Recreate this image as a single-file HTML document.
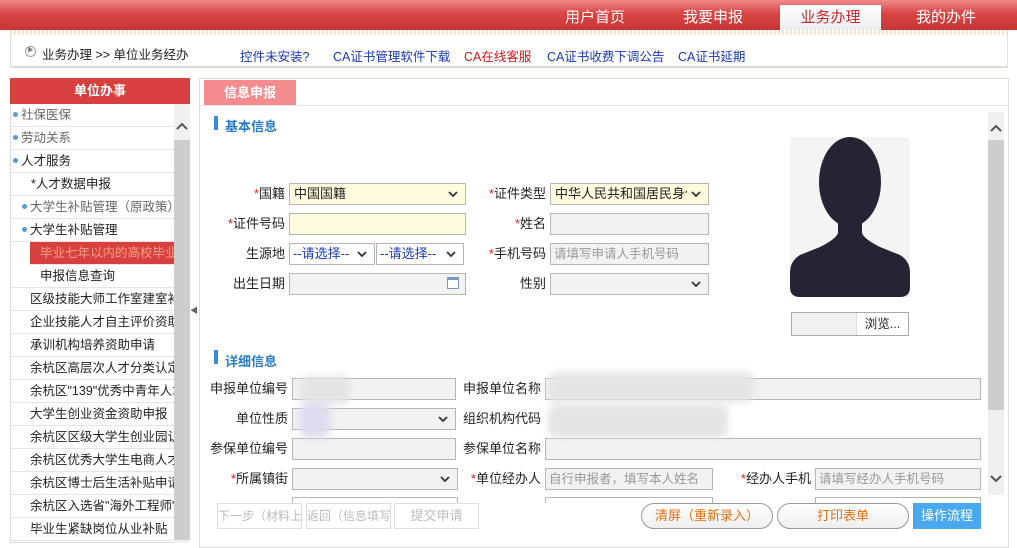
<!DOCTYPE html>
<html><head><meta charset="utf-8"><style>
*{box-sizing:border-box;margin:0;padding:0}
body{width:1017px;height:543px;overflow:hidden;background:#fff;font-family:"Liberation Sans","Noto Sans CJK SC",sans-serif;font-size:13px;color:#222;position:relative}
.a{position:absolute}
.top{left:0;top:0;width:1017px;height:30px;background:linear-gradient(#f08a8a,#d84545 45%,#c83434)}
.nav{color:#fff;font-size:15px;top:6px}
.act{left:780px;top:5px;width:101px;height:26px;background:linear-gradient(#fff,#ececec);color:#c8282a;font-size:15px;text-align:center;line-height:26px}
.stripe{left:10px;top:30px;width:998px;height:5px;background:repeating-linear-gradient(90deg,#f3e3cf 0 2px,#fff 2px 4px)}
.crumb{left:10px;top:35px;width:998px;height:33px;border:1px solid #dde;border-top:none;border-bottom:2px solid #d6dce6;background:#fff}
.lk{top:46px;color:#1a3ab8;font-size:12.5px}
.side{left:10px;top:78px;width:180px;height:465px;border:1px solid #ddd}
.sh{left:10px;top:78px;width:180px;height:26px;background:#d84040;color:#fff;font-weight:bold;text-align:center;line-height:26px}
.it{height:23px;line-height:22px;border-bottom:1px solid #e6e6e6;white-space:nowrap;overflow:hidden;width:164px;font-size:12.5px}
.dot{display:inline-block;width:5px;height:5px;border-radius:50%;background:#5b9bd5;margin:0 3px 2px 2px}
.main{left:199px;top:78px;width:810px;height:470px;border:1px solid #ddd}
.lab{text-align:right;font-size:13px;line-height:16px}
.r{color:#e02020}
.in{height:22px;border:1px solid #b5b5b5;background:#f2f2f2}
.y{background:#fffce0}
.sel svg.c{position:absolute;right:7px;top:7px}
.ph{color:#999;font-size:12.5px;line-height:20px;padding-left:3px}
.btn{height:26px;border:1px solid #ddd;color:#bbb;text-align:center;line-height:24px;font-size:13px;background:#fff;white-space:nowrap;overflow:hidden}
.rb{border:1px solid #999;border-radius:13px;color:#e07010;background:linear-gradient(#fff,#eee)}
.blur{background:#e4e4e4;filter:blur(4px);border-radius:8px}
</style></head><body>
<svg width="0" height="0" style="position:absolute"><defs><symbol id="dn" viewBox="0 0 10 6"><path d="M1 1 L5 5 L9 1" fill="none" stroke="#333" stroke-width="1.8"/></symbol></defs></svg>
<div class="a top"></div>
<div class="a nav" style="left:565px">用户首页</div>
<div class="a nav" style="left:683px">我要申报</div>
<div class="a act">业务办理</div>
<div class="a nav" style="left:916px">我的办件</div>
<div class="a stripe"></div>
<div class="a crumb"></div>
<div class="a" style="left:25px;top:46px;width:11px;height:11px;border:1px solid #999;border-radius:50%;font-size:6px;line-height:9px;text-align:center;color:#777">▶</div>
<div class="a" style="left:42px;top:44px;font-size:12.5px">业务办理 &gt;&gt; 单位业务经办</div>
<div class="a lk" style="left:240px">控件未安装?</div>
<div class="a lk" style="left:333px">CA证书管理软件下载</div>
<div class="a lk" style="left:464px;color:#d01818">CA在线客服</div>
<div class="a lk" style="left:547px">CA证书收费下调公告</div>
<div class="a lk" style="left:678px">CA证书延期</div>

<div class="a side"></div>
<div class="a sh">单位办事</div>
<div class="a" style="left:11px;top:104px">
<div class="it" style="color:#666"><span class="dot"></span>社保医保</div>
<div class="it" style="color:#666"><span class="dot"></span>劳动关系</div>
<div class="it"><span class="dot"></span>人才服务</div>
<div class="it" style="padding-left:20px">*人才数据申报</div>
<div class="it" style="padding-left:9px;color:#666"><span class="dot"></span>大学生补贴管理（原政策）</div>
<div class="it" style="padding-left:9px"><span class="dot"></span>大学生补贴管理</div>
<div class="it" style="margin-left:19px;width:145px;padding-left:10px;background:#d84040;color:#f7a080">毕业七年以内的高校毕业生</div>
<div class="it" style="padding-left:29px">申报信息查询</div>
<div class="it" style="padding-left:19px">区级技能大师工作室建室补贴</div>
<div class="it" style="padding-left:19px">企业技能人才自主评价资助</div>
<div class="it" style="padding-left:19px">承训机构培养资助申请</div>
<div class="it" style="padding-left:19px">余杭区高层次人才分类认定</div>
<div class="it" style="padding-left:19px">余杭区"139"优秀中青年人才</div>
<div class="it" style="padding-left:19px">大学生创业资金资助申报</div>
<div class="it" style="padding-left:19px">余杭区区级大学生创业园认定</div>
<div class="it" style="padding-left:19px">余杭区优秀大学生电商人才</div>
<div class="it" style="padding-left:19px">余杭区博士后生活补贴申请</div>
<div class="it" style="padding-left:19px">余杭区入选省"海外工程师"</div>
<div class="it" style="padding-left:19px">毕业生紧缺岗位从业补贴</div>
</div>
<div class="a" style="left:174px;top:104px;width:16px;height:439px;background:#f0f0f0"></div>
<div class="a" style="left:174px;top:140px;width:16px;height:400px;background:#cdcdcd"></div>
<svg class="a" style="left:176px;top:122px" width="12" height="8" viewBox="0 0 12 8"><path d="M1 7 L6 2 L11 7" fill="none" stroke="#555" stroke-width="2"/></svg>
<div class="a" style="left:190px;top:305px;font-size:8px;color:#666">◀</div>

<div class="a main"></div>
<div class="a" style="left:204px;top:80px;width:92px;height:25px;background:#f38b8f;color:#fff;text-align:center;line-height:25px;font-weight:bold">信息申报</div>
<div class="a" style="left:200px;top:105px;width:808px;height:1px;background:#e6e6e6"></div>
<div class="a" style="left:988px;top:112px;width:16px;height:383px;background:#f0f0f0"></div>
<div class="a" style="left:988px;top:140px;width:16px;height:270px;background:#cdcdcd"></div>
<svg class="a" style="left:990px;top:124px" width="12" height="8" viewBox="0 0 12 8"><path d="M1 7 L6 2 L11 7" fill="none" stroke="#555" stroke-width="2"/></svg>
<svg class="a" style="left:990px;top:475px" width="12" height="8" viewBox="0 0 12 8"><path d="M1 1 L6 6 L11 1" fill="none" stroke="#555" stroke-width="2"/></svg>

<div class="a" style="left:214px;top:116px;width:4px;height:14px;background:#3a8ee0"></div>
<div class="a" style="left:225px;top:116px;color:#2a7cc7;font-weight:bold">基本信息</div>

<div class="a lab" style="left:200px;top:186px;width:85px"><span class="r">*</span>国籍</div>
<div class="a in y sel" style="left:289px;top:183px;width:177px;padding-left:4px;line-height:20px">中国国籍<svg class="c" width="10" height="6"><use href="#dn"/></svg></div>
<div class="a lab" style="left:470px;top:186px;width:76px"><span class="r">*</span>证件类型</div>
<div class="a in y sel" style="left:550px;top:183px;width:159px;padding-left:4px;line-height:20px;overflow:hidden;white-space:nowrap"><span style="display:inline-block;width:132px;overflow:hidden">中华人民共和国居民身份</span><svg class="c" width="10" height="6"><use href="#dn"/></svg></div>
<div class="a lab" style="left:200px;top:216px;width:85px"><span class="r">*</span>证件号码</div>
<div class="a in y" style="left:289px;top:213px;width:177px"></div>
<div class="a lab" style="left:470px;top:216px;width:76px"><span class="r">*</span>姓名</div>
<div class="a in" style="left:550px;top:213px;width:159px"></div>
<div class="a lab" style="left:200px;top:246px;width:85px">生源地</div>
<div class="a in sel" style="left:289px;top:243px;width:86px;background:#fff;color:#1a3ab8;padding-left:3px;line-height:20px">--请选择--<svg class="c" width="10" height="6"><use href="#dn"/></svg></div>
<div class="a in sel" style="left:376px;top:243px;width:88px;background:#fff;color:#1a3ab8;padding-left:3px;line-height:20px">--请选择--<svg class="c" width="10" height="6"><use href="#dn"/></svg></div>
<div class="a lab" style="left:470px;top:246px;width:76px"><span class="r">*</span>手机号码</div>
<div class="a in ph" style="left:550px;top:243px;width:159px">请填写申请人手机号码</div>
<div class="a lab" style="left:200px;top:276px;width:85px">出生日期</div>
<div class="a in" style="left:289px;top:273px;width:177px"></div>
<div class="a" style="left:447px;top:277px;width:12px;height:12px;border:1px solid #7a98c0;border-top:3px solid #7a98c0;background:#fff"></div>
<div class="a lab" style="left:470px;top:276px;width:76px">性别</div>
<div class="a in sel" style="left:550px;top:273px;width:159px"><svg class="c" width="10" height="6"><use href="#dn"/></svg></div>

<div class="a" style="left:790px;top:137px;width:120px;height:160px;background:#f4f4f4"></div>
<svg class="a" style="left:790px;top:137px" width="120" height="160" viewBox="0 0 120 160"><ellipse cx="60" cy="45" rx="31" ry="45" fill="#262433"/><path d="M48 80 L48 96 Q46 102 30 110 L10 118 Q0 124 0 136 L0 150 Q0 160 10 160 L110 160 Q120 160 120 150 L120 136 Q120 124 110 118 L90 110 Q74 102 72 96 L72 80 Z" fill="#262433"/></svg>
<div class="a" style="left:791px;top:312px;width:118px;height:24px;border:1px solid #aaa;background:#f2f2f2"></div>
<div class="a" style="left:856px;top:313px;width:52px;height:22px;background:#fff;border-left:1px solid #ddd;text-align:center;line-height:22px;font-size:12.5px">浏览...</div>

<div class="a" style="left:214px;top:350px;width:4px;height:14px;background:#3a8ee0"></div>
<div class="a" style="left:225px;top:351px;color:#2a7cc7;font-weight:bold">详细信息</div>

<div class="a lab" style="left:200px;top:381px;width:88px">申报单位编号</div>
<div class="a in" style="left:292px;top:378px;width:164px"></div>
<div class="a lab" style="left:460px;top:381px;width:81px">申报单位名称</div>
<div class="a in" style="left:545px;top:378px;width:436px"></div>
<div class="a lab" style="left:200px;top:411px;width:88px">单位性质</div>
<div class="a in sel" style="left:292px;top:408px;width:164px"><svg class="c" width="10" height="6"><use href="#dn"/></svg></div>
<div class="a lab" style="left:460px;top:411px;width:81px">组织机构代码</div>
<div class="a lab" style="left:200px;top:441px;width:88px">参保单位编号</div>
<div class="a in" style="left:292px;top:438px;width:164px"></div>
<div class="a lab" style="left:460px;top:441px;width:81px">参保单位名称</div>
<div class="a in" style="left:545px;top:438px;width:436px"></div>
<div class="a lab" style="left:200px;top:471px;width:88px"><span class="r">*</span>所属镇街</div>
<div class="a in sel" style="left:292px;top:468px;width:166px"><svg class="c" width="10" height="6"><use href="#dn"/></svg></div>
<div class="a lab" style="left:460px;top:471px;width:81px"><span class="r">*</span>单位经办人</div>
<div class="a in ph" style="left:545px;top:468px;width:168px">自行申报者，填写本人姓名</div>
<div class="a lab" style="left:720px;top:471px;width:91px"><span class="r">*</span>经办人手机</div>
<div class="a in ph" style="left:815px;top:468px;width:166px">请填写经办人手机号码</div>
<div class="a" style="left:292px;top:497px;width:166px;height:6px;border:1px solid #b5b5b5;border-bottom:none"></div>
<div class="a" style="left:545px;top:497px;width:168px;height:6px;border:1px solid #b5b5b5;border-bottom:none"></div>
<div class="a" style="left:815px;top:497px;width:166px;height:6px;border:1px solid #b5b5b5;border-bottom:none"></div>

<div class="a blur" style="left:300px;top:376px;width:50px;height:28px"></div>
<div class="a blur" style="left:300px;top:402px;width:30px;height:36px;background:#dcdcee"></div>
<div class="a blur" style="left:548px;top:372px;width:205px;height:30px"></div>
<div class="a blur" style="left:548px;top:404px;width:180px;height:34px"></div>

<div class="a btn" style="left:217px;top:503px;width:85px;font-size:12px">下一步（材料上传）</div>
<div class="a btn" style="left:306px;top:503px;width:85px;font-size:12px">返回（信息填写）</div>
<div class="a btn" style="left:394px;top:503px;width:85px">提交申请</div>
<div class="a btn rb" style="left:641px;top:503px;width:132px">清屏（重新录入）</div>
<div class="a btn rb" style="left:777px;top:503px;width:132px">打印表单</div>
<div class="a btn" style="left:913px;top:503px;width:68px;background:#4aa8ee;border-color:#4aa8ee;color:#fff">操作流程</div>
</body></html>
